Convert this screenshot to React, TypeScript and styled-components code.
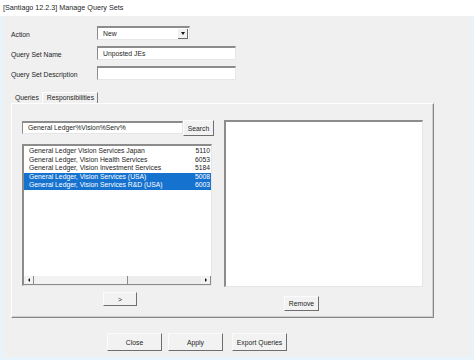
import styled, { createGlobalStyle } from 'styled-components';

const GlobalStyle = createGlobalStyle`
  * { box-sizing: border-box; }
  body {
    margin: 0;
    background: #e8f4fc;
    font-family: "Liberation Sans", Arial, sans-serif;
    color: #1e1e1e;
  }
`;

const Screen = styled.div`
  width: 474px;
  height: 360px;
  display: flex;
  flex-direction: column;
  background: #e8f4fc;
  overflow: hidden;
`;

const TitleBar = styled.div`
  height: 16px;
  background: #fff;
  padding-left: 3px;
  font-size: 7.2px;
  line-height: 16px;
`;

const Body = styled.div`
  margin-left: 3px;
  width: 469px;
  height: 341px;
  background: #f0f0f0;
  padding: 10px 0 0 8px;
  display: flex;
  flex-direction: column;
  font-size: 6.8px;
`;

const Form = styled.div`
  display: grid;
  grid-template-columns: 86px auto;
  grid-auto-rows: 14px;
  row-gap: 6px;
  align-items: center;
  justify-content: start;
`;

const Label = styled.div`
  padding-top: 2px;
`;

const Sunken = styled.div`
  background: #fff;
  border-top: 2px solid #8c8c8c;
  border-left: 1px solid #8c8c8c;
  border-right: 1px solid #e6e6e6;
  border-bottom: 1px solid #e6e6e6;
`;

const Combo = styled(Sunken)`
  width: 93px;
  height: 14px;
  display: flex;
  align-items: center;
  justify-content: space-between;
  padding-left: 5px;
  padding-right: 1px;
`;

const DropButton = styled.div`
  width: 10px;
  height: 10px;
  background: #f0f0f0;
  border-right: 1px solid #6a6a6a;
  border-bottom: 1px solid #6a6a6a;
  display: flex;
  align-items: center;
  justify-content: center;
  &::after {
    content: "";
    border-left: 2.5px solid transparent;
    border-right: 2.5px solid transparent;
    border-top: 3px solid #111;
  }
`;

const TextField = styled(Sunken)<{ $width: number }>`
  width: ${(p) => p.$width}px;
  height: 14px;
  padding-left: 5px;
  line-height: 11px;
  white-space: nowrap;
  overflow: hidden;
`;

const TabStrip = styled.div`
  margin-top: 12px;
  height: 11px;
  display: flex;
  padding-left: 2px;
`;

const Tab = styled.div<{ $active?: boolean }>`
  padding: 0 ${(p) => (p.$active ? '3px 0 4px' : '3px 0 2px')};
  line-height: ${(p) => (p.$active ? '9px' : '12px')};
  border-right: ${(p) => (p.$active ? '1px solid #7a7a7a' : 'none')};
  border-left: ${(p) => (p.$active ? '1px solid #fff' : 'none')};
  border-top: ${(p) => (p.$active ? '1px solid #fff' : 'none')};
`;

const Panel = styled.div`
  width: 423px;
  height: 215px;
  border-top: 1px solid #fff;
  border-left: 1px solid #fff;
  border-right: 1px solid #888;
  border-bottom: 1px solid #888;
  box-shadow: inset -1px -1px 0 #cfcfcf;
  padding: 16px 0 0 10px;
  display: flex;
  gap: 10px;
`;

const Column = styled.div<{ $width: number }>`
  width: ${(p) => p.$width}px;
  display: flex;
  flex-direction: column;
`;

const SearchRow = styled.div`
  height: 16px;
  display: flex;
  align-items: flex-start;
`;

const SearchInput = styled(TextField)`
  margin-top: 1px;
  height: 13px;
  line-height: 10px;
`;

const Button = styled.div<{ $width: number; $height: number; $offset?: number }>`
  width: ${(p) => p.$width}px;
  height: ${(p) => p.$height}px;
  margin-left: ${(p) => p.$offset ?? 0}px;
  background: #f2f2f2;
  border-top: 1px solid #fbfbfb;
  border-left: 1px solid #fbfbfb;
  border-right: 1px solid #6e6e6e;
  border-bottom: 1px solid #6e6e6e;
  display: flex;
  align-items: center;
  justify-content: center;
  white-space: nowrap;
  flex-shrink: 0;
`;

const ListBox = styled(Sunken)<{ $width: number; $height: number }>`
  width: ${(p) => p.$width}px;
  height: ${(p) => p.$height}px;
  border-left-width: 2px;
  display: flex;
  flex-direction: column;
  overflow: hidden;
`;

const Rows = styled.div`
  flex: 1;
  padding-top: 1px;
`;

const Row = styled.div<{ $selected?: boolean }>`
  height: 8.5px;
  line-height: 8.5px;
  display: flex;
  justify-content: space-between;
  padding: 0 1px 0 5px;
  white-space: nowrap;
  background: ${(p) => (p.$selected ? '#1672cf' : 'transparent')};
  color: ${(p) => (p.$selected ? '#fff' : 'inherit')};
`;

const HScroll = styled.div`
  height: 9px;
  display: flex;
  background: #ededed;
  border-bottom: 1px solid #8a8a8a;
`;

const ScrollArrow = styled.div<{ $dir: 'left' | 'right' }>`
  width: 10px;
  background: #f2f2f2;
  border-right: 1px solid #8a8a8a;
  display: flex;
  align-items: center;
  justify-content: center;
  &::after {
    content: "";
    border-top: 2px solid transparent;
    border-bottom: 2px solid transparent;
    ${(p) => (p.$dir === 'left' ? 'border-right: 2px solid #111;' : 'border-left: 2px solid #111;')}
  }
`;

const Thumb = styled.div`
  width: 94px;
  background: #f2f2f2;
  border-right: 1px solid #8a8a8a;
`;

const Track = styled.div`
  flex: 1;
`;

const Footer = styled.div`
  margin-top: 15px;
  padding-left: 96px;
  display: flex;
  gap: 6px;
`;

const responsibilities = [
  { name: 'General Ledger Vision Services Japan', id: '5110' },
  { name: 'General Ledger, Vision Health Services', id: '6053' },
  { name: 'General Ledger, Vision Investment Services', id: '5184' },
  { name: 'General Ledger, Vision Services (USA)', id: '5008', selected: true },
  { name: 'General Ledger, Vision Services R&D (USA)', id: '6003', selected: true },
];

export default function App() {
  return (
    <>
      <GlobalStyle />
      <Screen>
        <TitleBar>[Santiago 12.2.3] Manage Query Sets</TitleBar>
        <Body>
          <Form>
            <Label>Action</Label>
            <Combo>
              <span>New</span>
              <DropButton />
            </Combo>
            <Label>Query Set Name</Label>
            <TextField $width={139}>Unposted JEs</TextField>
            <Label>Query Set Description</Label>
            <TextField $width={139} />
          </Form>

          <TabStrip>
            <Tab>Queries</Tab>
            <Tab $active>Responsibilities</Tab>
          </TabStrip>

          <Panel>
            <Column $width={192}>
              <SearchRow>
                <SearchInput $width={161}>General Ledger%Vision%Serv%</SearchInput>
                <Button $width={31} $height={16}>Search</Button>
              </SearchRow>
              <ListBox $width={190} $height={142} style={{ marginTop: 8 }}>
                <Rows>
                  {responsibilities.map((r) => (
                    <Row key={r.id} $selected={r.selected}>
                      <span>{r.name}</span>
                      <span>{r.id}</span>
                    </Row>
                  ))}
                </Rows>
                <HScroll>
                  <ScrollArrow $dir="left" />
                  <Thumb />
                  <Track />
                  <ScrollArrow $dir="right" />
                </HScroll>
              </ListBox>
              <Button $width={34} $height={14} $offset={81} style={{ marginTop: 6 }}>
                &gt;
              </Button>
            </Column>
            <Column $width={199}>
              <ListBox $width={199} $height={167} />
              <Button $width={35} $height={15} $offset={60} style={{ marginTop: 9 }}>
                Remove
              </Button>
            </Column>
          </Panel>

          <Footer>
            <Button $width={55} $height={18}>Close</Button>
            <Button $width={55} $height={18}>Apply</Button>
            <Button $width={55} $height={18} $offset={3}>Export Queries</Button>
          </Footer>
        </Body>
      </Screen>
    </>
  );
}
